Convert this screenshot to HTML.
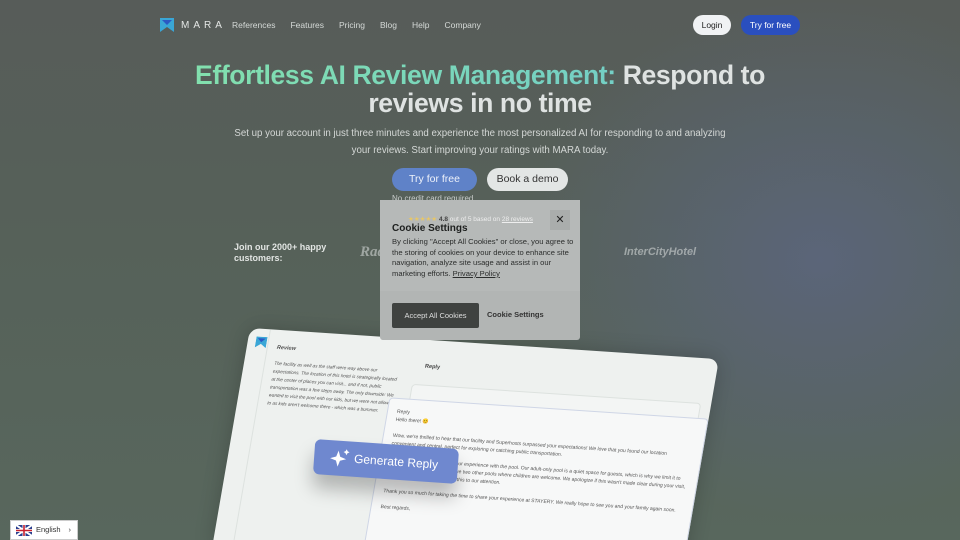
<!DOCTYPE html>
<html><head><meta charset="utf-8"><style>
*{margin:0;padding:0;box-sizing:border-box}
html,body{width:960px;height:540px;overflow:hidden}
body{font-family:"Liberation Sans",sans-serif;position:relative;
background:radial-gradient(ellipse 300px 260px at 820px 260px,#5b6579 0%,rgba(91,101,121,0) 100%),linear-gradient(180deg,#575c59 0%,#566159 45%,#58675d 100%);}
.wrap{position:absolute;left:0;top:0;width:960px;height:540px;overflow:hidden}
.logo{position:absolute;left:160px;top:18px;display:flex;align-items:center;gap:7px}
.logo span{color:#e4e6e5;font-size:10px;letter-spacing:4px}
.links{position:absolute;left:232px;top:20px;font-size:8.5px;color:#d5d9d7;display:flex;gap:15px}
.login{position:absolute;left:693px;top:15px;width:38px;height:20px;border-radius:10px;background:#f0f2f4;font-size:8.5px;color:#222;text-align:center;line-height:20px}
.try{position:absolute;left:741px;top:15px;width:59px;height:20px;border-radius:10px;background:#2a4fbf;font-size:8.5px;color:#fff;text-align:center;line-height:20px}
h1{position:absolute;top:61px;left:0;width:960px;text-align:center;font-size:26.6px;line-height:28px;color:#dfe3e2;font-weight:bold;letter-spacing:-.4px}
h1 .g{background:linear-gradient(90deg,#82e0ae,#74cfc5);-webkit-background-clip:text;color:transparent}
.sub{position:absolute;top:126px;left:0;width:960px;text-align:center;font-size:9.7px;line-height:16.5px;color:#d4d8d6}
.b1{position:absolute;left:392px;top:168px;width:85px;height:23px;border-radius:12px;background:#5f82c8;color:#eef2fa;font-size:10.5px;text-align:center;line-height:23px}
.b2{position:absolute;left:487px;top:168px;width:81px;height:23px;border-radius:12px;background:#e3e6e5;color:#333;font-size:10.5px;text-align:center;line-height:23px}
.ncc{position:absolute;left:392px;top:194px;font-size:8px;color:#c8ccca}
.join{position:absolute;left:234px;top:242px;font-size:9px;line-height:11px;color:#e2e5e3;font-weight:bold}
.hotel{position:absolute;color:rgba(220,224,222,.55);font-weight:bold;font-style:italic}
.mock{position:absolute;left:250px;top:328px;width:470px;height:220px;background:#eef1ef;border-radius:10px 10px 0 0;transform-origin:0 0;transform:rotate(3.8deg) skewX(-6deg);box-shadow:0 0 20px rgba(0,0,0,.2);overflow:hidden}
.mt{position:absolute;font-size:4.6px;color:#555;line-height:8px;font-style:italic}
.gen{position:absolute;left:314px;top:444px;width:144px;height:35px;background:#6f88cf;border-radius:6px;transform:rotate(4deg);color:#fff;font-size:12px;line-height:35px;padding-left:40px;box-shadow:0 14px 18px rgba(0,0,0,.25)}
.cookie{position:absolute;left:380px;top:200px;width:200px;height:140px;background:#b2b5b4;border-radius:3px}
.cookie .top{position:absolute;left:0;top:0;width:200px;height:91px;background:#b6b9b8}
.lang{position:absolute;left:10px;top:520px;width:68px;height:20px;background:#fff;border:1px solid #ccc;font-size:7.5px;color:#333;line-height:18px;padding-left:25px}
</style></head><body><div class="wrap">
<div class="logo"><svg width="14" height="14" viewBox="0 0 14 14"><path d="M0 0h14v14l-7-5-7 5z" fill="#3aa6d6"/><path d="M2 2h10L7 7z" fill="#2a59c4"/></svg><span>MARA</span></div>
<div class="links"><span>References</span><span>Features</span><span>Pricing</span><span>Blog</span><span>Help</span><span>Company</span></div>
<div class="login">Login</div><div class="try">Try for free</div>
<h1><span class="g">Effortless AI Review Management:</span> Respond to<br>reviews in no time</h1>
<div class="sub">Set up your account in just three minutes and experience the most personalized AI for responding to and analyzing<br>your reviews. Start improving your ratings with MARA today.</div>
<div class="b1">Try for free</div><div class="b2">Book a demo</div>
<div class="ncc">No credit card required</div>
<div class="join">Join our 2000+ happy<br>customers:</div>
<div class="hotel" style="left:360px;top:244px;font-size:15px;font-family:'Liberation Serif',serif">Radi</div>
<div class="hotel" style="left:624px;top:246px;font-size:11px">InterCityHotel</div>
<div class="mock">
<svg style="position:absolute;left:8px;top:8px" width="11" height="11" viewBox="0 0 14 14"><path d="M0 0h14v14l-7-5-7 5z" fill="#3aa6d6"/><path d="M2 2h10L7 7z" fill="#2a59c4"/></svg>
<div style="position:absolute;left:20px;top:0;width:1px;height:260px;background:#dde2df"></div>
<div class="mt" style="left:30px;top:14px;font-weight:bold;font-size:5.5px">Review</div>
<div style="position:absolute;left:180px;top:24px;font-size:5.5px;font-weight:bold;color:#444">Reply</div>
<div class="mt" style="left:30px;top:30px;width:128px">The facility as well as the staff were way above our expectations. The location of this hotel is strategically located at the center of places you can visit... and if not, public transportation was a few steps away. The only downside: We wanted to visit the pool with our kids, but we were not allowed to as kids aren't welcome there - which was a bummer.</div>
<div style="position:absolute;left:170px;top:45px;width:290px;height:30px;background:#f3f5f4;border:1px solid #dde2df;border-radius:4px"></div>
<div style="position:absolute;left:150px;top:60px;width:320px;height:210px;background:#f7f8f8;border:1px solid #cfd6e6;border-radius:4px"></div>
<div class="mt" style="left:160px;top:70px;width:300px;font-style:normal;font-size:5px">Reply<br>Hello there! 😊<br><br>Wow, we're thrilled to hear that our facility and Superhosts surpassed your expectations! We love that you found our location convenient and central, perfect for exploring or catching public transportation.<br><br>We were sorry to hear about your experience with the pool. Our adult-only pool is a quiet space for guests, which is why we limit it to adults only. However, we do have two other pools where children are welcome. We apologize if this wasn't made clear during your visit, and we appreciate you bringing this to our attention.<br><br>Thank you so much for taking the time to share your experience at STAYERY. We really hope to see you and your family again soon.<br><br>Best regards,</div>
</div>
<div class="gen"><svg style="position:absolute;left:16px;top:8px" width="20" height="20" viewBox="0 0 20 20" fill="#fff"><path d="M8 2l2 6 6 2-6 2-2 6-2-6-6-2 6-2z"/><path d="M16 0l1 2 2 1-2 1-1 2-1-2-2-1 2-1z"/></svg>Generate Reply</div>
<div class="cookie"><div class="top"></div>
<div style="position:absolute;left:28px;top:15px;font-size:6.5px;color:#eee"><span style="color:#e6c66a">★★★★★</span> <b style="color:#444">4.8</b> out of 5 based on <u>28 reviews</u></div>
<div style="position:absolute;left:170px;top:10px;width:20px;height:20px;background:#aaadac;font-size:11px;text-align:center;line-height:20px;color:#222">✕</div>
<div style="position:absolute;left:12px;top:23px;font-size:10px;font-weight:bold;color:#1d1f1e">Cookie Settings</div>
<div style="position:absolute;left:12px;top:37px;width:182px;font-size:7.6px;line-height:10.6px;color:#2c2e2d">By clicking "Accept All Cookies" or close, you agree to the storing of cookies on your device to enhance site navigation, analyze site usage and assist in our marketing efforts. <u>Privacy Policy</u></div>
<div style="position:absolute;left:12px;top:103px;width:87px;height:25px;background:#3f4240;border-radius:2px;color:#ddd;font-size:7.5px;text-align:center;line-height:25px">Accept All Cookies</div>
<div style="position:absolute;left:107px;top:110px;font-size:7.5px;font-weight:bold;color:#333">Cookie Settings</div>
</div>
<div class="lang"><svg style="position:absolute;left:5px;top:4px" width="16" height="11" viewBox="0 0 16 11"><rect width="16" height="11" fill="#2a3f8f"/><path d="M0 0L16 11M16 0L0 11" stroke="#fff" stroke-width="2"/><path d="M8 0v11M0 5.5h16" stroke="#fff" stroke-width="3"/><path d="M8 0v11M0 5.5h16" stroke="#c8202f" stroke-width="1.6"/></svg>English<span style="position:absolute;right:6px">›</span></div>
</div></body></html>
